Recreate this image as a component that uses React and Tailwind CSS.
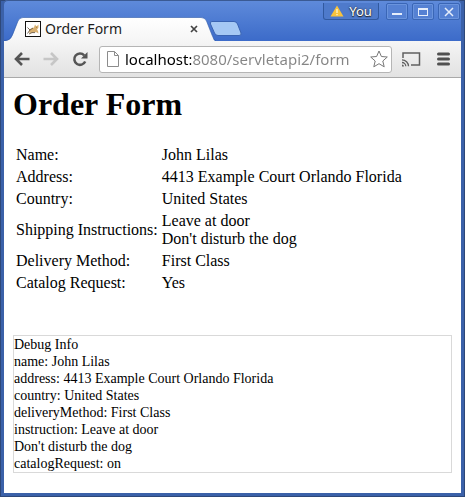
const order = [
  ["Name:", ["John Lilas"]],
  ["Address:", ["4413 Example Court Orlando Florida"]],
  ["Country:", ["United States"]],
  ["Shipping Instructions:", ["Leave at door", "Don't disturb the dog"]],
  ["Delivery Method:", ["First Class"]],
  ["Catalog Request:", ["Yes"]],
];

const debugLines = [
  "Debug Info",
  "name: John Lilas",
  "address: 4413 Example Court Orlando Florida",
  "country: United States",
  "deliveryMethod: First Class",
  "instruction: Leave at door",
  "Don't disturb the dog",
  "catalogRequest: on",
];

function Favicon() {
  return (
    <svg viewBox="0 0 16 16" className="size-4 shrink-0" aria-hidden="true">
      <rect x="0.5" y="0.5" width="15" height="15" fill="#fff" stroke="#111" />
      <path d="M4 9 L6 7.5 L9 6.5 L10 3.500 L11 5 H12 L13.500 3.500 L13.400 6.800 L12 8.400 L13 10 L13.500 12.500 L11.500 11.300 L9 11.200 L7 11.800 L4.500 12 Z" fill="#d9b070" />
      <path d="M2.500 6.500 L5 9 L2.500 12.500 M5 9 L8 7 M4 13 L7 11.600 H10 M11 6.500 H11.600" stroke="#6b5a46" strokeWidth="0.9" fill="none" />
    </svg>
  );
}

function TitleBar() {
  const control =
    "mt-[3px] flex h-[17px] w-[22px] items-center justify-center rounded-[2px] border border-[#3a66b6] bg-[#5581d3] shadow-[inset_0_0_0_1px_#6a94dd]";
  return (
    <header className="flex h-[41px] items-start justify-between rounded-t bg-linear-to-b from-[#5f8bdb] to-[#3c6bc9] pr-px shadow-[inset_0_1px_0_#3a5a94]">
      <div className="flex items-end self-stretch">
        <div className="relative flex h-6 w-[212px] items-center pl-[21px]">
          <svg viewBox="0 0 212 25" className="absolute -bottom-px left-0 h-[25px] w-[212px]" aria-hidden="true">
            <defs>
              <linearGradient id="tab" x1="0" y1="0" x2="0" y2="1">
                <stop offset="0" stopColor="#fff" />
                <stop offset="1" stopColor="#f5f5f5" />
              </linearGradient>
            </defs>
            <path
              d="M0 25 V24 C5 24 7 22 9 17 L14 4 Q15.5 0.5 19 0.5 H197 Q201 0.5 202.500 4 L208 18 C210 22.500 210 24 212 24 V25 Z"
              fill="url(#tab)"
            />
            <path
              d="M0 23.500 C5 23.500 7 21.500 9 16.500 L14 4 Q15.500 0.500 19 0.500 H197 Q201 0.500 202.500 4 L208 18 C210 22.500 210 23.500 212 23.500"
              fill="none"
              stroke="#315ca8"
              strokeOpacity="0.6"
            />
          </svg>
          <div className="relative flex flex-1 items-center">
            <Favicon />
            <span className="ml-1 flex-1 font-['Noto_Sans',sans-serif] text-sm leading-5 text-[#1c1c1c]">Order Form</span>
            <button aria-label="Close tab" className="mr-3.5 flex size-4 items-center justify-center">
              <svg viewBox="0 0 8 8" className="size-2" aria-hidden="true">
                <path d="M1 1 L7 7 M7 1 L1 7" stroke="#444" strokeWidth="1.7" />
              </svg>
            </button>
          </div>
        </div>
        <button aria-label="New tab" className="-ml-2 mb-1">
          <svg viewBox="0 0 34 17" className="h-[17px] w-[34px]" aria-hidden="true">
            <path
              d="M4 1.500 H26 Q28.500 1.500 29.500 4 L33 13 Q33.800 15.500 31 15.500 H10 Q7.500 15.500 6.500 13 L2.500 4 Q1.500 1.500 4 1.500 Z"
              fill="#a5c8f4"
              stroke="#3963b2"
            />
          </svg>
        </button>
      </div>
      <div className="flex items-start gap-1">
        <button className="mr-[3px] mt-[3px] flex h-[17px] w-[56px] items-center justify-center gap-[5px] rounded-b-[3px] border border-t-0 border-[#31599f] bg-[#4e7acb]">
          <svg viewBox="0 0 14 12" className="h-3 w-3.5 shrink-0" aria-hidden="true">
            <path d="M7 0.500 L13.500 11.500 H0.500 Z" fill="#f8c33c" />
            <path d="M7 4 V8 M7 9 V10.300" stroke="#fff6d0" strokeWidth="1.300" />
          </svg>
          <span className="font-['Noto_Sans',sans-serif] text-[13px] leading-4 text-white [text-shadow:0_0_2px_#222,0_1px_1px_#222]">You</span>
        </button>
        <button aria-label="Minimize" className={control}>
          <svg viewBox="0 0 12 10" className="h-2.5 w-3" aria-hidden="true">
            <path d="M1 7 H11" stroke="#e6eefb" strokeWidth="2" />
          </svg>
        </button>
        <button aria-label="Maximize" className={control}>
          <svg viewBox="0 0 12 10" className="h-2.5 w-3" aria-hidden="true">
            <rect x="1.500" y="1.500" width="9" height="7" fill="none" stroke="#e6eefb" />
            <path d="M1 2 H11" stroke="#e6eefb" strokeWidth="2" />
          </svg>
        </button>
        <button aria-label="Close" className={control}>
          <svg viewBox="0 0 12 10" className="h-2.5 w-3" aria-hidden="true">
            <path d="M2 1 L10 9 M10 1 L2 9" stroke="#e6eefb" strokeWidth="1.500" />
          </svg>
        </button>
      </div>
    </header>
  );
}

function Toolbar() {
  return (
    <nav className="flex h-[37px] items-center border-b border-[#a9a9a9] bg-linear-to-b from-[#f5f5f5] to-[#e2e2e2] pl-2.5 pr-2.5">
      <button aria-label="Back">
        <svg viewBox="0 0 16 16" className="size-4" aria-hidden="true">
          <path d="M15.500 8 H2 M8 2 L2 8 L8 14" fill="none" stroke="#555" strokeWidth="2.600" />
        </svg>
      </button>
      <button aria-label="Forward" className="ml-[13px]">
        <svg viewBox="0 0 16 16" className="size-4" aria-hidden="true">
          <path d="M0.500 8 H14 M8 2 L14 8 L8 14" fill="none" stroke="#c6c6c6" strokeWidth="2.600" />
        </svg>
      </button>
      <button aria-label="Reload" className="ml-[13px]">
        <svg viewBox="0 0 16 16" className="size-4" aria-hidden="true">
          <path d="M12.200 4.300 A5.700 5.700 0 1 0 13.200 10.500" fill="none" stroke="#555" strokeWidth="2.500" />
          <path d="M15.500 1 V7.500 H9 Z" fill="#555" />
        </svg>
      </button>
      <form className="ml-[11px] flex h-[27px] min-w-0 flex-1 items-center rounded-[3px] border border-[#b5b5b5] bg-white pl-[7px] pr-[3px]">
        <svg viewBox="0 0 12 16" className="h-4 w-3 shrink-0" aria-hidden="true">
          <path d="M0.500 0.500 H7.500 L11.500 4.500 V15.500 H0.500 Z M7.500 0.500 V4.500 H11.500" fill="#fff" stroke="#8c8c8c" />
        </svg>
        <input
          aria-label="Address"
          defaultValue="localhost:8080/servletapi2/form"
          className="ml-1.5 min-w-0 flex-1 bg-[linear-gradient(90deg,#000_66px,#858585_66px)] bg-clip-text font-['Noto_Sans',sans-serif] text-[15px] leading-5 text-transparent outline-none"
        />
        <button type="button" aria-label="Bookmark" className="shrink-0">
          <svg viewBox="0 0 18 18" className="size-[18px]" aria-hidden="true">
            <path
              d="M9 1 L11.400 6.500 L17.300 7 L12.800 11 L14.200 16.800 L9 13.700 L3.800 16.800 L5.200 11 L0.700 7 L6.600 6.500 Z"
              fill="#fff"
              stroke="#777"
              strokeLinejoin="round"
            />
          </svg>
        </button>
      </form>
      <button aria-label="Cast" className="ml-[9px]">
        <svg viewBox="0 0 20 16" className="h-4 w-5" aria-hidden="true">
          <path d="M2 7 V2 H18.500 V14 H10" fill="none" stroke="#606060" strokeWidth="1.500" />
          <path d="M1 8.800 A6.500 6.500 0 0 1 7.500 15.300 M1 11.500 A3.800 3.800 0 0 1 4.800 15.300" fill="none" stroke="#606060" strokeWidth="1.300" />
          <path d="M1 13.500 A2 2 0 0 1 3 15.500 H1 Z" fill="#606060" />
        </svg>
      </button>
      <button aria-label="Menu" className="ml-[15px]">
        <svg viewBox="0 0 15 14" className="h-3.5 w-[15px]" aria-hidden="true">
          <path d="M2.500 2 H12.500 M2.500 7 H12.500 M2.500 12 H12.500" stroke="#505050" strokeWidth="3" strokeLinecap="round" />
        </svg>
      </button>
    </nav>
  );
}

export default function App() {
  return (
    <div className="flex min-h-screen flex-col bg-[#3b61a9] px-1 pb-1 shadow-[inset_0_0_0_1px_#2e4879]">
      <TitleBar />
      <Toolbar />
      <main className="flex-1 bg-white px-[9px] pt-2 font-['Liberation_Serif',serif] text-base leading-[18px] text-black">
        <h1 className="text-[32px] font-bold leading-9">Order Form</h1>
        <table className="mt-[21px] border-separate border-spacing-0.5">
          <tbody>
            {order.map(([label, values]) => (
              <tr key={label}>
                <th scope="row" className="p-px text-left align-middle font-normal">{label}</th>
                <td className="p-px">
                  {values.map((value) => (
                    <div key={value}>{value}</div>
                  ))}
                </td>
              </tr>
            ))}
          </tbody>
        </table>
        <section className="mt-10 border border-[#d9d9d9] text-sm leading-[17px]">
          {debugLines.map((line) => (
            <p key={line}>{line}</p>
          ))}
        </section>
      </main>
    </div>
  );
}
